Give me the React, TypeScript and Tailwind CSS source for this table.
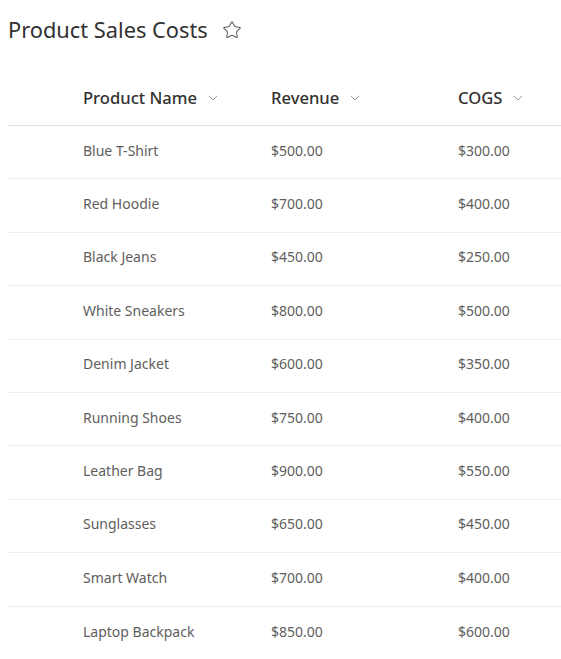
import { ChevronDown, Star } from "lucide-react";

const products = [
  { name: "Blue T-Shirt", revenue: "$500.00", cogs: "$300.00" },
  { name: "Red Hoodie", revenue: "$700.00", cogs: "$400.00" },
  { name: "Black Jeans", revenue: "$450.00", cogs: "$250.00" },
  { name: "White Sneakers", revenue: "$800.00", cogs: "$500.00" },
  { name: "Denim Jacket", revenue: "$600.00", cogs: "$350.00" },
  { name: "Running Shoes", revenue: "$750.00", cogs: "$400.00" },
  { name: "Leather Bag", revenue: "$900.00", cogs: "$550.00" },
  { name: "Sunglasses", revenue: "$650.00", cogs: "$450.00" },
  { name: "Smart Watch", revenue: "$700.00", cogs: "$400.00" },
  { name: "Laptop Backpack", revenue: "$850.00", cogs: "$600.00" },
];

function HeaderCell({ label }: { label: string }) {
  return (
    <div className="flex items-center gap-2">
      <span>{label}</span>
      <ChevronDown className="h-4 w-4 text-[#8a8886]" strokeWidth={1.25} />
    </div>
  );
}

export default function App() {
  return (
    <div className="min-h-[659px] w-[561px] bg-white font-['Noto_Sans',sans-serif] text-[#323130]">
      <div className="flex h-[60px] items-center gap-[14px] pl-2">
        <h1 className="text-[21.8px] leading-none">Product Sales Costs</h1>
        <Star className="h-5 w-5 text-[#605e5c]" strokeWidth={1.25} />
      </div>
      <div className="ml-2 mt-3">
        <div className="grid h-[54px] grid-cols-[75px_188px_187px_1fr] items-center border-b border-[#e1dfdd] text-[16.6px] font-medium">
          <div />
          <HeaderCell label="Product Name" />
          <HeaderCell label="Revenue" />
          <HeaderCell label="COGS" />
        </div>
        {products.map((p, i) => (
          <div
            key={p.name}
            className={`grid h-[53.4px] grid-cols-[75px_188px_187px_1fr] items-center pb-1 text-[14px] text-[#605e5c] ${i < products.length - 1 ? "border-b border-[#f0eeec]" : ""}`}
          >
            <div />
            <div>{p.name}</div>
            <div>{p.revenue}</div>
            <div>{p.cogs}</div>
          </div>
        ))}
      </div>
    </div>
  );
}
